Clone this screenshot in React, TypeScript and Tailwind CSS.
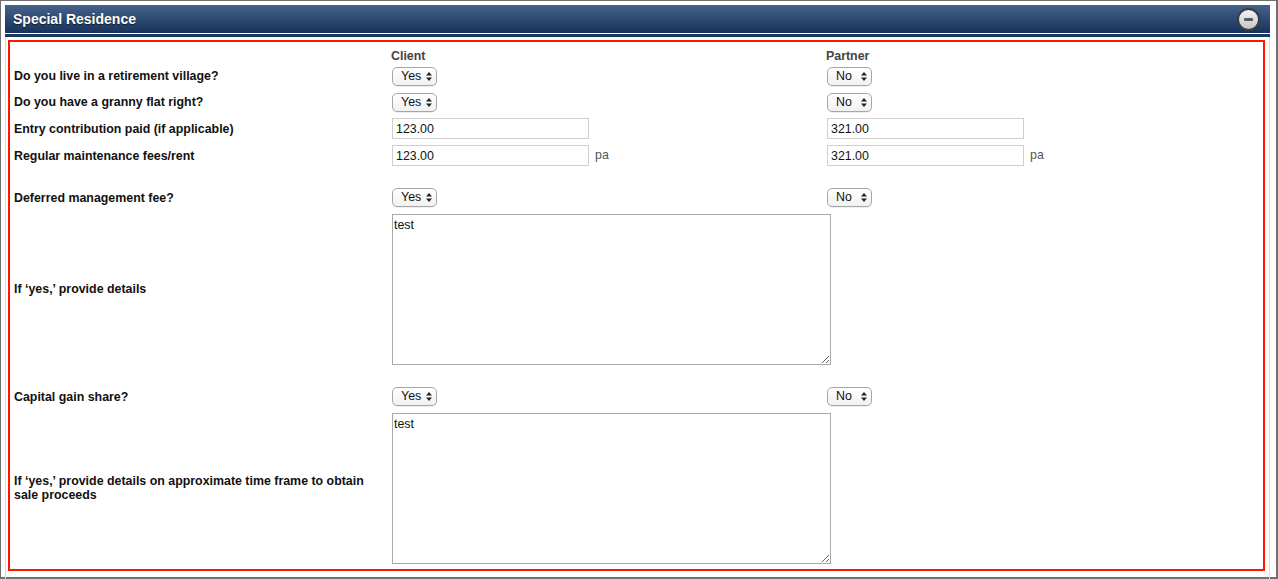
import React from 'react';

const font = { fontFamily: '"Liberation Sans", Arial, Helvetica, sans-serif' };

function YesNo({ value }: { value: string }) {
  return (
    <span className="relative inline-flex h-[19px] w-[45px]">
      <select
        defaultValue={value}
        className="h-[19px] w-[45px] appearance-none rounded-[5px] border border-[#a6a6a6] bg-gradient-to-b from-white to-[#f1f1f1] pl-[8px] text-[12.4px] leading-[17px] text-[#111] shadow-[0_1px_0_rgba(0,0,0,0.06)] outline-none"
      >
        <option>Yes</option>
        <option>No</option>
      </select>
      <svg
        className="pointer-events-none absolute right-[5px] top-[5px]"
        width="6"
        height="9"
        viewBox="0 0 6 9"
      >
        <path d="M3 0 L6 3.6 L0 3.6 Z" fill="#222" />
        <path d="M0 5.4 L6 5.4 L3 9 Z" fill="#222" />
      </svg>
    </span>
  );
}

function Amount({ value, pa }: { value: string; pa?: boolean }) {
  return (
    <div className="flex items-center gap-[6px]">
      <input
        defaultValue={value}
        className="h-[21px] w-[197px] border border-[#cfcfcf] bg-white px-[3px] text-[12.4px] text-[#111] outline-none"
      />
      {pa && <span className="text-[12.4px] text-[#555]">pa</span>}
    </div>
  );
}

function Label({ children }: { children: React.ReactNode }) {
  return <div className="pl-[4px] pr-3 text-[12.4px] font-bold leading-[14px] text-[#111]">{children}</div>;
}

function Details() {
  return (
    <textarea
      defaultValue="test"
      className="block h-[151px] w-[439px] border border-[#a9a9a9] bg-white px-[1px] pt-[3px] text-[12.4px] leading-[15px] text-[#111] outline-none"
    />
  );
}

export default function App() {
  return (
    <div className="h-[579px] w-[1278px] overflow-hidden bg-white" style={font}>
      <div className="h-[579px] w-[1278px] border border-r-2 border-b-2 border-[#707070] pl-1 pt-1 pr-[6px]">
        <div className="flex h-[28px] items-center justify-between bg-gradient-to-b from-[#46638b] to-[#17325b] pl-2 pr-[10px]">
          <span className="text-[14px] font-bold text-white [text-shadow:0_1px_1px_rgba(0,0,0,0.6)]">
            Special Residence
          </span>
          <span className="flex h-[23px] w-[23px] items-center justify-center rounded-full border-2 border-[#3a3d42] bg-gradient-to-b from-[#f4f4f4] to-[#c6c6c6]">
            <span className="h-[3px] w-[9px] rounded-[1px] bg-[#555b63]" />
          </span>
        </div>
        <div className="h-px bg-white" />
        <div className="h-[3px] bg-[#1b3765]" />
        <div className="h-[545px] border-x border-[#dcdcdc] pl-[2px] pr-[4px] pt-[3px]">
          <div className="h-[531px] border-2 border-[#ff1500]">
            <div className="grid grid-cols-[381px_435px_1fr]">
              {/* headers */}
              <div className="h-[21px]" />
              <div className="flex h-[21px] items-end text-[12.4px] font-bold leading-[14px] text-[#444]">Client</div>
              <div className="flex h-[21px] items-end text-[12.4px] font-bold leading-[14px] text-[#444]">Partner</div>

              <div className="flex h-[26px] items-center"><Label>Do you live in a retirement village?</Label></div>
              <div className="flex h-[26px] items-center pl-[1px]"><YesNo value="Yes" /></div>
              <div className="flex h-[26px] items-center pl-[1px]"><YesNo value="No" /></div>

              <div className="flex h-[26px] items-center"><Label>Do you have a granny flat right?</Label></div>
              <div className="flex h-[26px] items-center pl-[1px]"><YesNo value="Yes" /></div>
              <div className="flex h-[26px] items-center pl-[1px]"><YesNo value="No" /></div>

              <div className="flex h-[27px] items-center"><Label>Entry contribution paid (if applicable)</Label></div>
              <div className="flex h-[27px] items-center pl-[1px]"><Amount value="123.00" /></div>
              <div className="flex h-[27px] items-center pl-[1px]"><Amount value="321.00" /></div>

              <div className="flex h-[27px] items-center"><Label>Regular maintenance fees/rent</Label></div>
              <div className="flex h-[27px] items-center pl-[1px]"><Amount value="123.00" pa /></div>
              <div className="flex h-[27px] items-center pl-[1px]"><Amount value="321.00" pa /></div>

              <div className="col-span-3 h-[15px]" />

              <div className="flex h-[27px] items-center"><Label>Deferred management fee?</Label></div>
              <div className="flex h-[27px] items-center pl-[1px]"><YesNo value="Yes" /></div>
              <div className="flex h-[27px] items-center pl-[1px]"><YesNo value="No" /></div>

              <div className="flex h-[156px] items-center"><Label>If ‘yes,’ provide details</Label></div>
              <div className="col-span-2 flex h-[156px] items-start pl-[1px] pt-[3px]"><Details /></div>

              <div className="col-span-3 h-[16px]" />

              <div className="flex h-[27px] items-center"><Label>Capital gain share?</Label></div>
              <div className="flex h-[27px] items-center pl-[1px]"><YesNo value="Yes" /></div>
              <div className="flex h-[27px] items-center pl-[1px]"><YesNo value="No" /></div>

              <div className="flex h-[156px] items-center"><Label>If ‘yes,’ provide details on approximate time frame to obtain sale proceeds</Label></div>
              <div className="col-span-2 flex h-[156px] items-start pl-[1px] pt-[3px]"><Details /></div>
            </div>
          </div>
        </div>
      </div>
    </div>
  );
}
